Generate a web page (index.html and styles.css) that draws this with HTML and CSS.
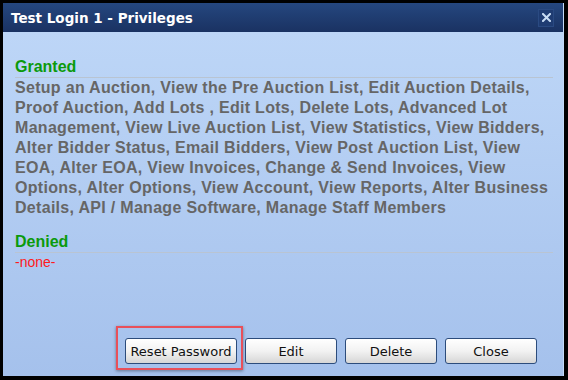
FILE: index.html
```html
<!DOCTYPE html>
<html lang="en">
<head>
    <meta charset="UTF-8">
    <meta name="viewport" content="width=device-width, initial-scale=1.0">
    <title>Privileges</title>
    <link rel="stylesheet" href="styles.css">
</head>
<body>
    <div class="dialog">
        <div class="title-bar">
            <span class="title">Test Login 1 - Privileges</span>
            <span class="close-x">
                <svg width="9" height="9" viewBox="0 0 9 9"><path d="M1 1L8 8M8 1L1 8" stroke="#c8dcf4" stroke-width="2" stroke-linecap="square"/></svg>
            </span>
        </div>
        <div class="dialog-body">
            <div class="section">
                <h2 class="granted">Granted</h2>
                <p class="priv-list">Setup an Auction, View the Pre Auction List, Edit Auction Details, Proof Auction, Add Lots , Edit Lots, Delete Lots, Advanced Lot Management, View Live Auction List, View Statistics, View Bidders, Alter Bidder Status, Email Bidders, View Post Auction List, View EOA, Alter EOA, View Invoices, Change &amp; Send Invoices, View Options, Alter Options, View Account, View Reports, Alter Business Details, API / Manage Software, Manage Staff Members</p>
            </div>
            <div class="section">
                <h2 class="granted">Denied</h2>
                <p class="none">-none-</p>
            </div>
            <div class="actions">
                <button class="btn btn-wide highlighted">Reset Password</button>
                <button class="btn">Edit</button>
                <button class="btn">Delete</button>
                <button class="btn">Close</button>
            </div>
        </div>
    </div>
</body>
</html>
```

FILE: styles.css
```css
:root {
    --title-top: #25477f;
    --title-bottom: #1a3262;
    --body-top: #bdd6f7;
    --body-bottom: #a5c1ec;
    --green: #0b9a0b;
    --gray-text: #666666;
}

body, html {
    margin: 0;
    padding: 0;
    background-color: #000;
    height: 100vh;
    overflow: hidden;
}

.dialog {
    margin: 3px 0 0 3px;
    width: 561px;
    height: 373px;
    display: flex;
    flex-direction: column;
    border-right: 1px solid #c4dbf8;
    box-sizing: border-box;
}

.title-bar {
    height: 29px;
    background: linear-gradient(to bottom, var(--title-top), var(--title-bottom));
    display: flex;
    align-items: center;
    justify-content: space-between;
    padding: 0 9px 0 8px;
}

.title {
    color: #fff;
    font-family: 'DejaVu Sans', sans-serif;
    font-weight: bold;
    font-size: 13.5px;
}

.close-x {
    width: 14px;
    height: 16px;
    background-color: #1f3c72;
    border: 1px solid #2a4a82;
    display: flex;
    align-items: center;
    justify-content: center;
}

.dialog-body {
    flex: 1;
    background: linear-gradient(to bottom, var(--body-top), var(--body-bottom));
    padding: 25px 10px 0 12px;
    display: flex;
    flex-direction: column;
    font-family: 'Liberation Sans', Arial, sans-serif;
}

.section {
    margin-bottom: 14px;
}

.granted {
    margin: 0;
    color: var(--green);
    font-size: 16px;
    font-weight: bold;
    line-height: 20px;
    border-bottom: 1px solid #b9c4d2;
}

.priv-list {
    margin: 0;
    color: var(--gray-text);
    font-size: 16px;
    font-weight: bold;
    line-height: 20px;
    letter-spacing: 0.3px;
}

.none {
    margin: 0;
    color: #ff1a1a;
    font-size: 14px;
    line-height: 18px;
}

.actions {
    margin-top: auto;
    margin-bottom: 12px;
    display: flex;
    align-items: flex-end;
    justify-content: flex-end;
    gap: 8px;
    padding-right: 16px;
}

.btn {
    width: 92px;
    height: 26px;
    font-family: 'DejaVu Sans', sans-serif;
    font-size: 13px;
    color: #111;
    background: linear-gradient(to bottom, #ffffff 0%, #f2f2f2 50%, #d6d6d6 100%);
    border: 1px solid #2c4c7c;
    border-radius: 3px;
    padding: 0;
}

.btn-wide {
    width: 112px;
}

/* red annotation box round the reset button */
.highlighted {
    position: relative;
}

.highlighted::after {
    content: '';
    position: absolute;
    top: -13px;
    left: -10px;
    right: -7px;
    bottom: -7px;
    border: 2px solid #e8505a;
    box-shadow: 0 1px 3px rgba(0, 0, 0, 0.4);
    pointer-events: none;
}
```
